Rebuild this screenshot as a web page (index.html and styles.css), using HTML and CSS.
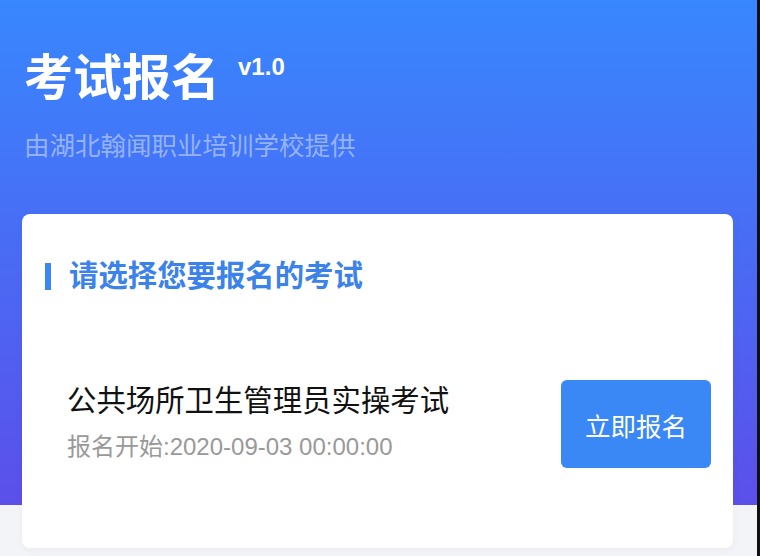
FILE: index.html
```html
<!DOCTYPE html>
<html lang="zh-CN">
<head>
  <meta charset="UTF-8" />
  <meta name="viewport" content="width=device-width, initial-scale=1.0"/>
  <title>考试报名</title>
  <link rel="stylesheet" href="styles.css">
</head>
<body>

  <div class="page">
    <!-- Header -->
    <header class="header">
      <div class="title-row">
        <h1 class="title">考试报名</h1>
        <span class="version">v1.0</span>
      </div>
      <p class="subtitle">由湖北翰闻职业培训学校提供</p>
    </header>

    <!-- Exam list -->
    <section class="card">
      <h2 class="card-title">请选择您要报名的考试</h2>

      <div class="exam">
        <div class="exam-info">
          <div class="exam-name">公共场所卫生管理员实操考试</div>
          <div class="exam-date">报名开始:2020-09-03 00:00:00</div>
        </div>
        <a class="btn" href="#">立即报名</a>
      </div>
    </section>
  </div>

</body>
</html>
```

FILE: styles.css
```css
body {
  margin: 0;
  font-family: "Liberation Sans", "Noto Sans CJK SC", sans-serif;
  background-color: #f3f4f7;
}

.page {
  min-height: 556px;
  box-sizing: border-box;
  border-right: 3px solid #111;
  padding: 0 24px 0 22px;
  background: linear-gradient(to bottom, #3887fe 0, #5b4fea 505px, #f3f4f7 505px);
}

.header {
  padding: 50px 0 0 2px;
  color: white;
}

.title-row {
  display: flex;
  align-items: flex-start;
  gap: 18px;
}

.title {
  margin: 0;
  font-size: 49px;
  line-height: 57px;
  font-weight: bold;
}

.version {
  margin-top: 6px;
  font-size: 24px;
  line-height: 22px;
  font-weight: bold;
}

.subtitle {
  margin: 22px 0 0;
  font-size: 25.5px;
  line-height: 34px;
  color: rgba(255, 255, 255, 0.45);
}

.card {
  margin-top: 51px;
  background-color: white;
  border-radius: 8px;
  padding: 42px 22px 80px 23px;
  box-shadow: 0 2px 8px rgba(0, 0, 0, 0.04);
}

.card-title {
  display: flex;
  align-items: center;
  gap: 18px;
  margin: 0;
  font-size: 29.4px;
  line-height: 40px;
  font-weight: bold;
  color: #3b82ea;
}

.card-title::before {
  content: "";
  width: 6px;
  height: 27px;
  background-color: #3a86f5;
}

.exam {
  display: flex;
  justify-content: space-between;
  align-items: center;
  margin-top: 84px;
  padding-left: 22px;
}

.exam-name {
  font-size: 29.4px;
  line-height: 36px;
  color: #111;
}

.exam-date {
  margin-top: 10px;
  font-size: 24px;
  line-height: 36px;
  color: #999;
}

.btn {
  width: 150px;
  height: 88px;
  display: flex;
  align-items: center;
  justify-content: center;
  border-radius: 6px;
  background-color: #3a87f6;
  color: white;
  font-size: 25.5px;
  text-decoration: none;
}
```
